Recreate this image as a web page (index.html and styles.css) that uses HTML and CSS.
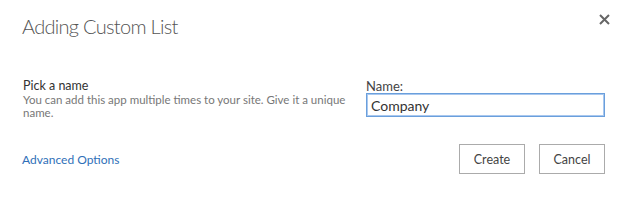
FILE: index.html
```html
<!DOCTYPE html>
<html lang="en">
<head>
    <meta charset="UTF-8">
    <meta name="viewport" content="width=device-width, initial-scale=1.0">
    <title>Adding Custom List</title>
    <link rel="stylesheet" href="styles.css">
</head>
<body>
    <div class="dialog">
        <div class="header">
            <h1 class="title">Adding Custom List</h1>
            <button class="close" aria-label="Close">
                <svg width="11" height="11" viewBox="0 0 11 11">
                    <path d="M1 1L10 10M10 1L1 10" stroke="#666" stroke-width="2" fill="none"/>
                </svg>
            </button>
        </div>
        <div class="content">
            <div class="info">
                <div class="info-title">Pick a name</div>
                <div class="info-desc">You can add this app multiple times to your site. Give it a unique name.</div>
            </div>
            <div class="field">
                <label class="field-label" for="name">Name:</label>
                <input class="field-input" id="name" type="text" value="Company">
            </div>
        </div>
        <div class="footer">
            <a class="advanced" href="#">Advanced Options</a>
            <div class="actions">
                <button class="btn">Create</button>
                <button class="btn">Cancel</button>
            </div>
        </div>
    </div>
</body>
</html>
```
FILE: styles.css
```css
body {
    margin: 0;
    background-color: #fff;
    font-family: Lato, "Open Sans", sans-serif;
    color: #333;
}

.dialog {
    width: 628px;
    height: 202px;
    box-sizing: border-box;
    padding: 11px 23px 0 22px;
}

.header {
    display: flex;
    justify-content: space-between;
    align-items: flex-start;
}

.title {
    margin: 0;
    font-size: 20px;
    font-weight: 300;
    letter-spacing: -0.7px;
    line-height: 30px;
    color: #555;
}

.close {
    border: none;
    background: none;
    padding: 0;
    margin: 3px -5px 0 0;
    width: 11px;
    height: 11px;
    cursor: pointer;
}

.close svg {
    display: block;
}

.content {
    display: flex;
    justify-content: space-between;
    margin-top: 37px;
}

.info {
    width: 325px;
    padding-left: 1px;
}

.info-title {
    font-size: 12.5px;
    line-height: 15px;
    color: #333;
}

.info-desc {
    font-size: 11.5px;
    line-height: 13px;
    color: #777;
}

.field {
    width: 239px;
    padding-top: 1px;
}

.field-label {
    display: block;
    font-size: 13px;
    line-height: 14px;
    color: #444;
}

.field-input {
    display: block;
    box-sizing: border-box;
    width: 239px;
    height: 24px;
    padding: 0 4px;
    border: 1px solid #6a9fdc;
    box-shadow: 0 0 0 1px #a9c8ef inset;
    font-family: Lato, "Open Sans", sans-serif;
    font-size: 14px;
    color: #333;
    outline: none;
}

.footer {
    display: flex;
    justify-content: space-between;
    align-items: center;
    margin-top: 25px;
}

.advanced {
    font-size: 12px;
    color: #2f6fb8;
    text-decoration: none;
    margin-top: 1px;
}

.actions {
    display: flex;
    gap: 14px;
}

.btn {
    width: 66px;
    height: 30px;
    border: 1px solid #ababab;
    background-color: #fff;
    font-family: Lato, "Open Sans", sans-serif;
    font-size: 12.5px;
    color: #444;
    padding: 0;
    cursor: pointer;
}
```
